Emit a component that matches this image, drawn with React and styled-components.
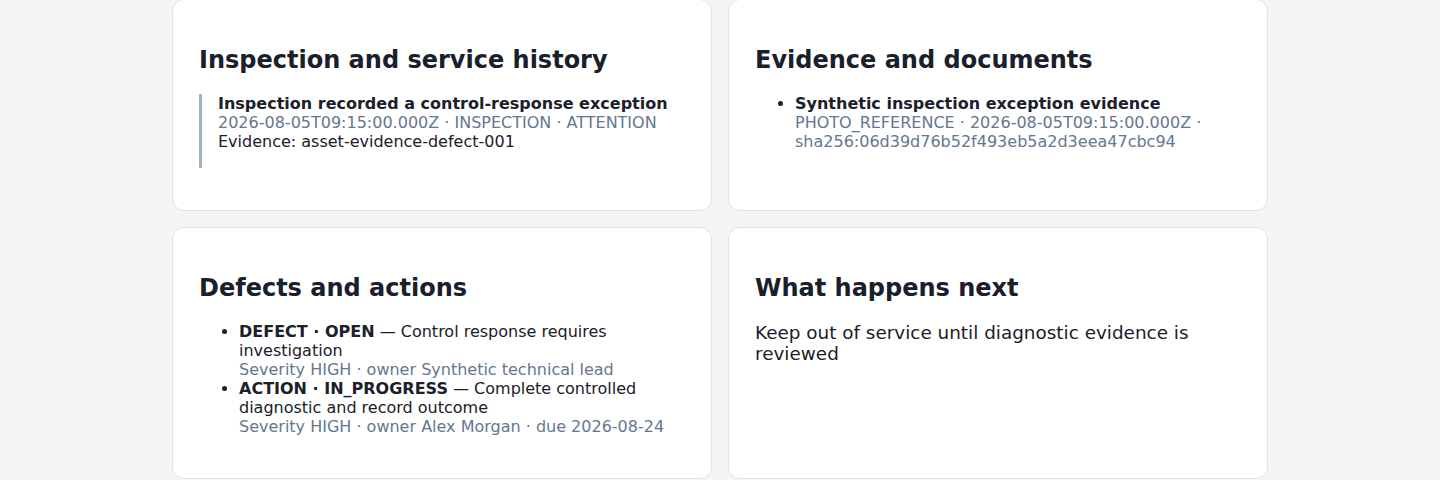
import React from 'react';
import styled, { createGlobalStyle } from 'styled-components';

const GlobalStyle = createGlobalStyle`
  html, body {
    margin: 0;
    padding: 0;
    background: #f4f5f7;
    font-family: "DejaVu Sans", "Noto Sans", sans-serif;
    color: #1b202a;
  }
`;

const Grid = styled.div`
  width: 1096px;
  margin: -1px auto 0;
  display: grid;
  grid-template-columns: 1fr 1fr;
  gap: 16px;
`;

const Card = styled.section`
  background: #ffffff;
  border: 1px solid #dde3ec;
  border-radius: 12px;
  padding: 25px 26px;
`;

const Title = styled.h2`
  margin: 21px 0 18.5px;
  font-size: 24px;
  line-height: 29px;
  font-weight: 700;
  color: #18202b;
`;

const Timeline = styled.div`
  margin: 0 0 17.5px;
`;

const Event = styled.div`
  border-left: 3px solid #a3b3c6;
  padding: 0 0 17px 16px;
  font-size: 16px;
  line-height: 19px;
`;

const List = styled.ul`
  margin: 0 0 17.5px;
  padding-left: 40px;
  font-size: 16px;
  line-height: 19px;
`;

const Strong = styled.strong`
  font-weight: 700;
  display: ${p => (p.$block ? 'block' : 'inline')};
`;

const Muted = styled.div`
  color: #64778f;
`;

const Text = styled.p`
  margin: 0 0 17.5px;
  font-size: 18.4px;
  line-height: 21px;
`;

export default function App() {
  return (
    <>
      <GlobalStyle />
      <Grid>
        <Card>
          <Title>Inspection and service history</Title>
          <Timeline>
            <Event>
              <Strong $block>Inspection recorded a control-response exception</Strong>
              <Muted>2026-08-05T09:15:00.000Z · INSPECTION · ATTENTION</Muted>
              <div>Evidence: asset-evidence-defect-001</div>
            </Event>
          </Timeline>
        </Card>
        <Card>
          <Title>Evidence and documents</Title>
          <List>
            <li>
              <Strong $block>Synthetic inspection exception evidence</Strong>
              <Muted>PHOTO_REFERENCE · 2026-08-05T09:15:00.000Z · sha256:06d39d76b52f493eb5a2d3eea47cbc94</Muted>
            </li>
          </List>
        </Card>
        <Card>
          <Title>Defects and actions</Title>
          <List>
            <li>
              <Strong>DEFECT · OPEN</Strong> — Control response requires investigation
              <Muted>Severity HIGH · owner Synthetic technical lead</Muted>
            </li>
            <li>
              <Strong>ACTION · IN_PROGRESS</Strong> — Complete controlled diagnostic and record outcome
              <Muted>Severity HIGH · owner Alex Morgan · due 2026-08-24</Muted>
            </li>
          </List>
        </Card>
        <Card>
          <Title>What happens next</Title>
          <Text>Keep out of service until diagnostic evidence is reviewed</Text>
        </Card>
      </Grid>
    </>
  );
}
